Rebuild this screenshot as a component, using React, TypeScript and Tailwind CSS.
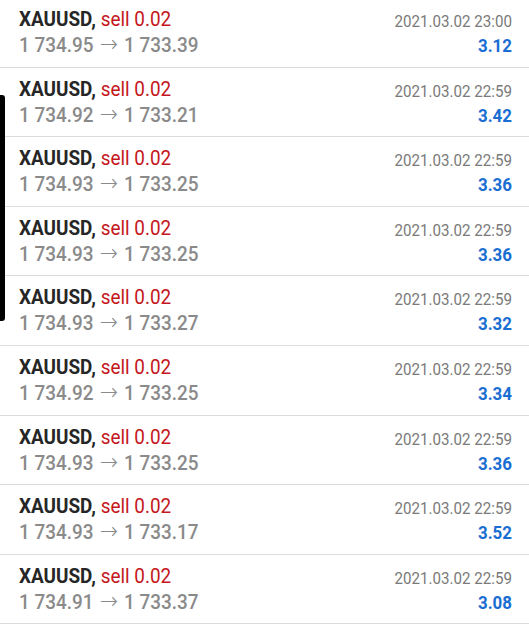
import React from "react";

interface ITrade {
  open: string;
  close: string;
  time: string;
  profit: string;
}

const trades: ITrade[] = [
  { open: "1 734.95", close: "1 733.39", time: "2021.03.02 23:00", profit: "3.12" },
  { open: "1 734.92", close: "1 733.21", time: "2021.03.02 22:59", profit: "3.42" },
  { open: "1 734.93", close: "1 733.25", time: "2021.03.02 22:59", profit: "3.36" },
  { open: "1 734.93", close: "1 733.25", time: "2021.03.02 22:59", profit: "3.36" },
  { open: "1 734.93", close: "1 733.27", time: "2021.03.02 22:59", profit: "3.32" },
  { open: "1 734.92", close: "1 733.25", time: "2021.03.02 22:59", profit: "3.34" },
  { open: "1 734.93", close: "1 733.25", time: "2021.03.02 22:59", profit: "3.36" },
  { open: "1 734.93", close: "1 733.17", time: "2021.03.02 22:59", profit: "3.52" },
  { open: "1 734.91", close: "1 733.37", time: "2021.03.02 22:59", profit: "3.08" },
];

function TradeRow({ trade }: { trade: ITrade }) {
  return (
    <div className="flex h-[69.6px] justify-between border-b border-[#dcdcdc] pl-[19px] pr-[17px] pt-[9px]">
      <div className="origin-left scale-x-[0.9] whitespace-nowrap">
        <div className="text-[21px] leading-[24px]">
          <span className="font-bold text-[#262626]">XAUUSD,</span>{" "}
          <span className="text-[#c4161c]">sell 0.02</span>
        </div>
        <div className="text-[21px] font-medium leading-[26px] text-[#8a8a8a]">
          {trade.open}
          <span
            className="mx-[7px] text-[24px] font-light"
            style={{ fontFamily: "'DejaVu Sans', sans-serif" }}
          >
            →
          </span>
          {trade.close}
        </div>
      </div>
      <div className="flex origin-right scale-x-[0.89] flex-col items-end whitespace-nowrap">
        <div className="pt-[2px] text-[17px] leading-[24px] text-[#7a7a7a]">{trade.time}</div>
        <div className="mt-[2px] text-[19px] font-bold leading-[22px] text-[#1a6ed2]">{trade.profit}</div>
      </div>
    </div>
  );
}

export default function App() {
  return (
    <div
      className="relative h-[625px] w-[529px] overflow-hidden bg-white"
      style={{ fontFamily: "Roboto, 'Liberation Sans', sans-serif" }}
    >
      <div className="-mt-[2px]">
        {trades.map((t, i) => (
          <TradeRow key={i} trade={t} />
        ))}
      </div>
      {/* phone edge */}
      <div className="absolute left-0 top-[95px] h-[226px] w-[5px] rounded-r-[3px] bg-black" />
    </div>
  );
}
